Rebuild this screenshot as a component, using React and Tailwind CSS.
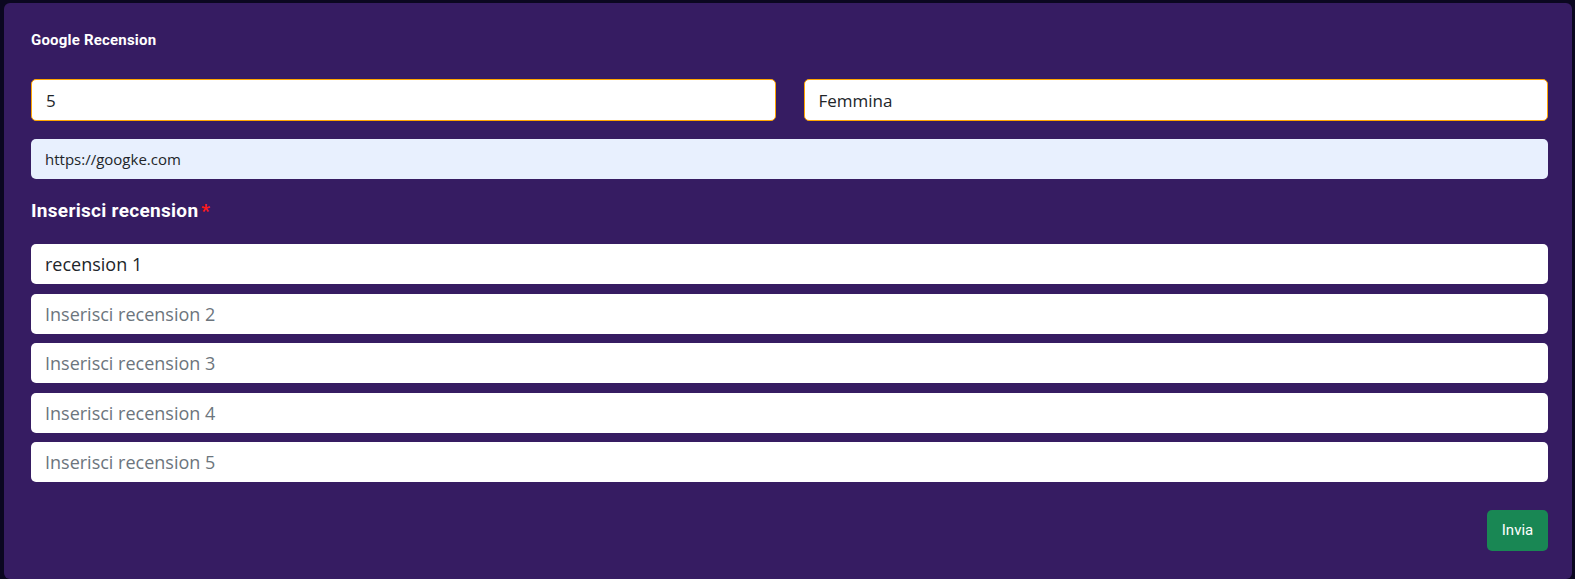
export default function App() {
  const reviews = ["recension 1", "", "", "", ""];

  return (
    <div className="min-h-[579px] bg-[#0b0720] pl-[4px] pt-[3px] pr-[3px]">
      <div
        className="min-h-[576px] rounded-[6px] bg-[#361c62] pl-[27px] pr-[24px] pt-[27px] pb-[28px]"
        style={{ fontFamily: '"Open Sans", sans-serif' }}
      >
        <h2
          className="text-[15px] font-bold leading-[20px] tracking-[0.2px] text-white"
          style={{ fontFamily: 'Roboto, sans-serif' }}
        >
          Google Recension
        </h2>

        <div className="mt-[29px] grid grid-cols-2 gap-[28px]">
          <input
            type="text"
            defaultValue="5"
            className="h-[42px] w-full rounded-[5px] border border-[#ffa500] bg-white px-[14px] text-[17px] text-[#212529] outline-none"
          />
          <input
            type="text"
            defaultValue="Femmina"
            className="h-[42px] w-full rounded-[5px] border border-[#ffa500] bg-white px-[14px] text-[17px] text-[#212529] outline-none"
          />
        </div>

        <input
          type="text"
          defaultValue="https://googke.com"
          className="mt-[18px] block h-[40px] w-full rounded-[5px] bg-[#e8f0fe] px-[14px] text-[15px] text-[#212529] outline-none"
        />

        <label
          className="mt-[20px] block text-[19px] font-bold leading-[24px] tracking-[0.3px] text-white"
          style={{ fontFamily: 'Roboto, sans-serif' }}
        >
          Inserisci recension<span className="ml-[3px] text-[#ff1a1a]">*</span>
        </label>

        <div className="mt-[21px] flex flex-col gap-[9.5px]">
          {reviews.map((value, i) => (
            <input
              key={i}
              type="text"
              defaultValue={value}
              placeholder={`Inserisci recension ${i + 1}`}
              className="block h-[40px] w-full rounded-[5px] bg-white px-[14px] text-[18px] text-[#212529] outline-none placeholder:text-[#6c757d]"
            />
          ))}
        </div>

        <div className="mt-[28px] flex justify-end">
          <button
            className="h-[41px] w-[61px] rounded-[5px] bg-[#198754] text-[15px] text-white"
            style={{ fontFamily: 'Roboto, sans-serif' }}
          >
            Invia
          </button>
        </div>
      </div>
    </div>
  );
}
